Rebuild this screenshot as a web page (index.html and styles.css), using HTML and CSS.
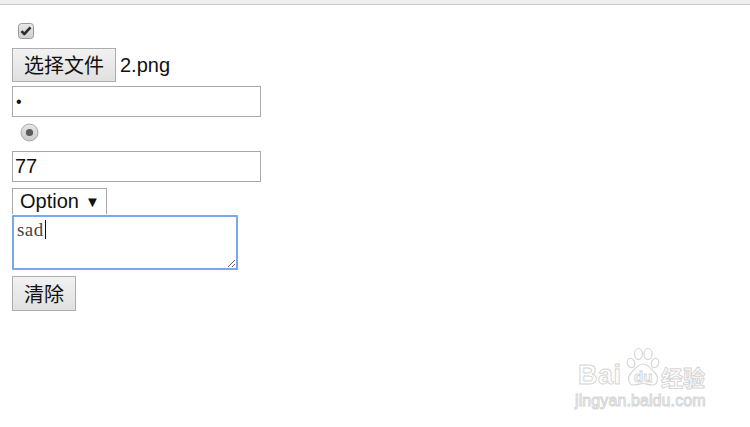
FILE: index.html
```html
<!DOCTYPE html>
<html>
<head>
<meta charset="utf-8">
<link rel="stylesheet" href="styles.css">
</head>
<body>
<div class="chrome"></div>
<form class="form">
  <span class="check">
    <svg width="16" height="16" viewBox="0 0 16 16"><defs><linearGradient id="g1" x1="0" y1="0" x2="0" y2="1"><stop offset="0" stop-color="#e8e8e8"/><stop offset="1" stop-color="#cfcfcf"/></linearGradient></defs><rect x="0.5" y="0.5" width="15" height="15" rx="3" fill="url(#g1)" stroke="#9a9a9a"/><path d="M3.5 8.2 L6.3 11 L12.5 4.3" fill="none" stroke="#2e2e2e" stroke-width="2.6" stroke-linejoin="round"/></svg>
  </span>
  <div class="filerow">
    <button type="button" class="btn">选择文件</button>
    <span class="fname">2.png</span>
  </div>
  <input class="field pw" type="password" value="a">
  <span class="radio">
    <svg width="19" height="19" viewBox="0 0 19 19"><defs><linearGradient id="g2" x1="0" y1="0" x2="0" y2="1"><stop offset="0" stop-color="#e6e6e6"/><stop offset="1" stop-color="#cbcbcb"/></linearGradient></defs><circle cx="9.5" cy="9.5" r="8.5" fill="url(#g2)" stroke="#a8a8a8"/><circle cx="9.5" cy="9.5" r="3.6" fill="#5a5a5a"/></svg>
  </span>
  <input class="field num" type="text" value="77">
  <div class="select"><span>Option</span><span class="arrow">▼</span></div>
  <div class="tawrap">
    <textarea class="ta">sad</textarea>
    <span class="caret"></span>
  </div>
  <button type="button" class="btn clear">清除</button>
</form>
<div class="wm">
  <span class="bai">Bai</span>
  <svg class="paw" width="34" height="40" viewBox="0 0 34 40" fill="#fff" stroke="#d6d6d6" stroke-width="1.2">
    <ellipse cx="5" cy="16" rx="3.6" ry="4.8" transform="rotate(-20 5 16)"/>
    <ellipse cx="12.5" cy="7" rx="4" ry="5.5"/>
    <ellipse cx="22" cy="7" rx="4" ry="5.5"/>
    <ellipse cx="29" cy="16" rx="3.6" ry="4.8" transform="rotate(20 29 16)"/>
    <path d="M17 17 C22 17 25 22 29 26 C33 30 32 38 26 38 C22 38 20 36.5 17 36.5 C14 36.5 12 38 8 38 C2 38 1 30 5 26 C9 22 12 17 17 17 Z"/>
  </svg>
  <span class="du">du</span>
  <span class="jy">经验</span>
  <span class="url">jingyan.baidu.com</span>
</div>
</body>
</html>
```
FILE: styles.css
```css
html, body { margin: 0; padding: 0; background: #fff; }
body { width: 750px; height: 427px; overflow: hidden; position: relative; font-family: "Liberation Sans", Arial, "Noto Sans CJK SC", sans-serif; }
.chrome { height: 4px; background: #f0f0f0; border-bottom: 1px solid #c6c6c6; }
.form { display: flex; flex-direction: column; align-items: flex-start; padding-left: 12px; }
.check { display: block; margin: 18px 0 0 6px; height: 16px; }
.check svg, .radio svg { display: block; }
.filerow { display: flex; align-items: center; margin-top: 9px; }
.btn { box-sizing: border-box; height: 34px; padding: 0; border: 1px solid #adadad; background: linear-gradient(#f2f2f2, #e0e0e0); font-family: "Noto Sans CJK SC", sans-serif; font-size: 20px; color: #111; line-height: 1; border-radius: 0; }
.filerow .btn { width: 104px; }
.fname { margin-left: 4px; font-size: 20px; color: #111; }
.field { box-sizing: border-box; width: 249px; height: 31px; border: 1px solid #a9a9a9; margin: 0; padding: 0 3px; background: #fff; color: #111; font-family: "Liberation Sans", Arial, sans-serif; outline: none; }
.pw { margin-top: 4px; font-size: 16px; }
.radio { display: block; margin: 6px 0 0 8px; height: 19px; }
.num { margin-top: 9px; font-size: 20px; padding-left: 2px; }
.select { box-sizing: border-box; margin-top: 6px; width: 95px; height: 26px; border: 1px solid #a9a9a9; border-bottom: none; display: flex; align-items: center; padding-left: 7px; font-size: 20px; color: #111; gap: 6px; }
.select .arrow { font-size: 15px; }
.tawrap { position: relative; margin-top: 1px; }
.ta { display: block; box-sizing: border-box; width: 226px; height: 55px; margin: 0; border: 2px solid #78a6f0; border-radius: 1px; padding: 2px 3px; font-family: "Liberation Serif", "DejaVu Serif", serif; font-size: 19px; line-height: 22px; color: #444; letter-spacing: 0.4px; outline: none; resize: both; background: #fff; }
.caret { position: absolute; left: 33px; top: 5px; width: 1px; height: 19px; background: #111; }
.clear { margin-top: 6px; width: 64px; height: 35px; }
.wm { position: absolute; left: 0; top: 0; width: 750px; height: 427px; pointer-events: none; color: #fff; -webkit-text-stroke: 1px #d6d6d6; font-family: "Liberation Sans", Arial, "Noto Sans CJK SC", sans-serif; }
.wm > * { position: absolute; }
.bai { left: 578px; top: 360px; font-size: 27px; font-weight: bold; letter-spacing: 0.5px; line-height: 30px; }
.paw { left: 626px; top: 347px; }
.du { left: 634px; top: 368px; font-size: 15px; font-weight: bold; line-height: 18px; }
.jy { left: 661px; top: 363px; font-family: "Noto Sans CJK SC", sans-serif; font-size: 22px; font-weight: bold; line-height: 26px; }
.url { left: 575px; top: 391px; font-size: 16px; line-height: 20px; letter-spacing: 0.1px; }
```
